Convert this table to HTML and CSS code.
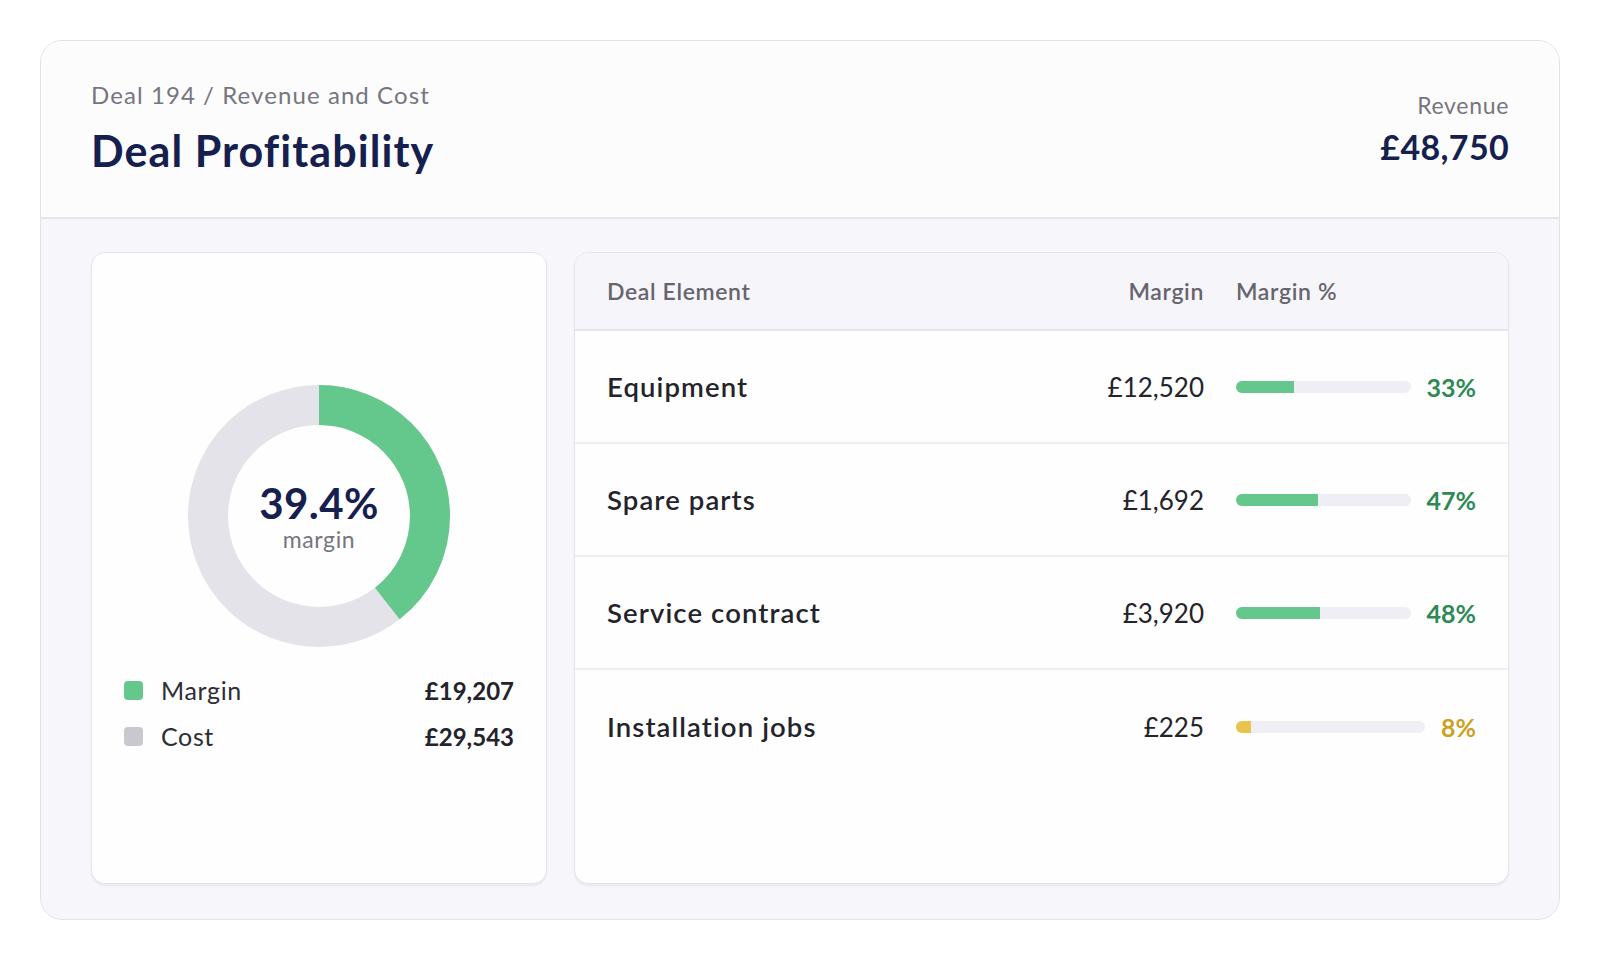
FILE: index.html
```html
<!DOCTYPE html>
<html lang="en">
<head>
<meta charset="utf-8">
<title>Deal Profitability</title>
<link rel="stylesheet" href="styles.css">
</head>
<body>
<div class="panel">
  <header class="panel-head">
    <div class="titles">
      <div class="crumb">Deal 194 / Revenue and Cost</div>
      <h1 class="title">Deal Profitability</h1>
    </div>
    <div class="revenue">
      <div class="rev-label">Revenue</div>
      <div class="rev-value">£48,750</div>
    </div>
  </header>
  <main class="panel-body">
    <section class="card summary">
      <div class="donut">
        <svg class="donut-svg" width="262" height="262" viewBox="0 0 262 262">
          <circle cx="131" cy="131" r="111" fill="none" stroke="#e4e3ea" stroke-width="40"/>
          <circle cx="131" cy="131" r="111" fill="none" stroke="#64c78c" stroke-width="40" stroke-dasharray="274.8 697.5" transform="rotate(-90 131 131)"/>
        </svg>
        <div class="donut-center">
          <div class="donut-pct">39.4%</div>
          <div class="donut-label">margin</div>
        </div>
      </div>
      <ul class="legend">
        <li class="legend-row"><span class="swatch swatch-green"></span><span class="legend-name">Margin</span><span class="legend-val">£19,207</span></li>
        <li class="legend-row"><span class="swatch swatch-gray"></span><span class="legend-name">Cost</span><span class="legend-val">£29,543</span></li>
      </ul>
    </section>
    <section class="card table">
      <div class="row head-row">
        <div class="c-name">Deal Element</div>
        <div class="c-margin">Margin</div>
        <div class="c-pct">Margin %</div>
      </div>
      <div class="row">
        <div class="c-name name">Equipment</div>
        <div class="c-margin val">£12,520</div>
        <div class="c-pct bar-cell"><div class="track"><div class="fill fill-green" style="width:33%"></div></div><span class="pct pct-green">33%</span></div>
      </div>
      <div class="row">
        <div class="c-name name">Spare parts</div>
        <div class="c-margin val">£1,692</div>
        <div class="c-pct bar-cell"><div class="track"><div class="fill fill-green" style="width:47%"></div></div><span class="pct pct-green">47%</span></div>
      </div>
      <div class="row">
        <div class="c-name name">Service contract</div>
        <div class="c-margin val">£3,920</div>
        <div class="c-pct bar-cell"><div class="track"><div class="fill fill-green" style="width:48%"></div></div><span class="pct pct-green">48%</span></div>
      </div>
      <div class="row last">
        <div class="c-name name">Installation jobs</div>
        <div class="c-margin val">£225</div>
        <div class="c-pct bar-cell"><div class="track"><div class="fill fill-yellow" style="width:8%"></div></div><span class="pct pct-yellow">8%</span></div>
      </div>
    </section>
  </main>
</div>
</body>
</html>
```
FILE: styles.css
```css
* { box-sizing: border-box; }
html, body { margin: 0; padding: 0; background: #ffffff; }
body {
  font-family: "Lato", "Liberation Sans", sans-serif;
  color: #24232b;
  padding: 40px;
  letter-spacing: 0.04em;
}
.panel {
  width: 1520px;
  height: 880px;
  border: 1px solid #e3e2e8;
  border-radius: 22px;
  overflow: hidden;
  display: flex;
  flex-direction: column;
  background: #f7f6fa;
}
.panel-head {
  background: #fcfcfd;
  border-bottom: 2px solid #e6e5eb;
  padding: 38px 50px 40px;
  display: flex;
  justify-content: space-between;
  align-items: center;
}
.crumb {
  font-size: 24px;
  line-height: 32px;
  color: #76757f;
  letter-spacing: 0.045em;
}
.title {
  margin: 14px 0 0;
  font-size: 43px;
  line-height: 52px;
  font-weight: 700;
  color: #15204e;
  letter-spacing: 0.025em;
}
.revenue { text-align: right; }
.rev-label {
  font-size: 23px;
  line-height: 30px;
  color: #76757f;
  letter-spacing: 0.03em;
}
.rev-value {
  margin-top: 7px;
  font-size: 34px;
  line-height: 40px;
  font-weight: 700;
  color: #15204e;
  letter-spacing: 0.01em;
}
.panel-body {
  flex: 1;
  padding: 33px 50px 35px;
  display: grid;
  grid-template-columns: 456px 1fr;
  column-gap: 27px;
}
.card {
  background: #fefefe;
  border: 1px solid #e6e5eb;
  border-radius: 14px;
  box-shadow: 0 2px 2px rgba(40, 36, 70, 0.06);
  overflow: hidden;
}
.summary {
  display: flex;
  flex-direction: column;
  justify-content: center;
  padding: 0 32px;
}
.donut {
  position: relative;
  width: 262px;
  height: 262px;
  margin: 0 auto;
}
.donut-svg { display: block; }
.donut-center {
  position: absolute;
  inset: 0;
  display: flex;
  flex-direction: column;
  align-items: center;
  justify-content: center;
  padding-top: 2px;
}
.donut-pct {
  font-size: 42px;
  line-height: 44px;
  font-weight: 700;
  color: #15204e;
  letter-spacing: 0.01em;
}
.donut-label {
  font-size: 23px;
  line-height: 28px;
  color: #76757f;
}
.legend {
  list-style: none;
  margin: 28px 0 0;
  padding: 0;
  display: flex;
  flex-direction: column;
  gap: 16px;
}
.legend-row {
  display: flex;
  align-items: center;
  height: 30px;
}
.swatch {
  width: 19px;
  height: 19px;
  border-radius: 4px;
  margin-right: 18px;
}
.swatch-green { background: #64c78c; }
.swatch-gray { background: #c9c8cf; }
.legend-name {
  flex: 1;
  font-size: 25px;
  color: #2e2d35;
}
.legend-val {
  font-size: 24px;
  font-weight: 700;
  color: #24232b;
  letter-spacing: 0;
}
.table {
  display: flex;
  flex-direction: column;
}
.row {
  display: grid;
  grid-template-columns: 1fr 140px 240px;
  column-gap: 32px;
  align-items: center;
  padding: 0 32px;
  height: 113px;
  border-bottom: 2px solid #efeef3;
}
.row.last { border-bottom: none; }
.head-row {
  height: 78px;
  background: #f6f5f9;
  border-bottom: 2px solid #e6e5eb;
  font-size: 23px;
  font-weight: 600;
  color: #66656f;
}
.c-margin { text-align: right; }
.name {
  font-size: 27.5px;
  font-weight: 600;
  color: #24232b;
  letter-spacing: 0.04em;
}
.val {
  font-size: 26px;
  color: #24232b;
  letter-spacing: 0;
}
.bar-cell {
  display: flex;
  align-items: center;
  gap: 16px;
}
.track {
  flex: 1;
  height: 12px;
  border-radius: 6px;
  background: #efeef4;
  overflow: hidden;
}
.fill { height: 100%; }
.fill-green { background: #64c78c; }
.fill-yellow { background: #e9c34b; }
.pct {
  font-size: 25px;
  font-weight: 700;
  letter-spacing: 0;
}
.pct-green { color: #2d8a55; }
.pct-yellow { color: #cba11f; }
```
